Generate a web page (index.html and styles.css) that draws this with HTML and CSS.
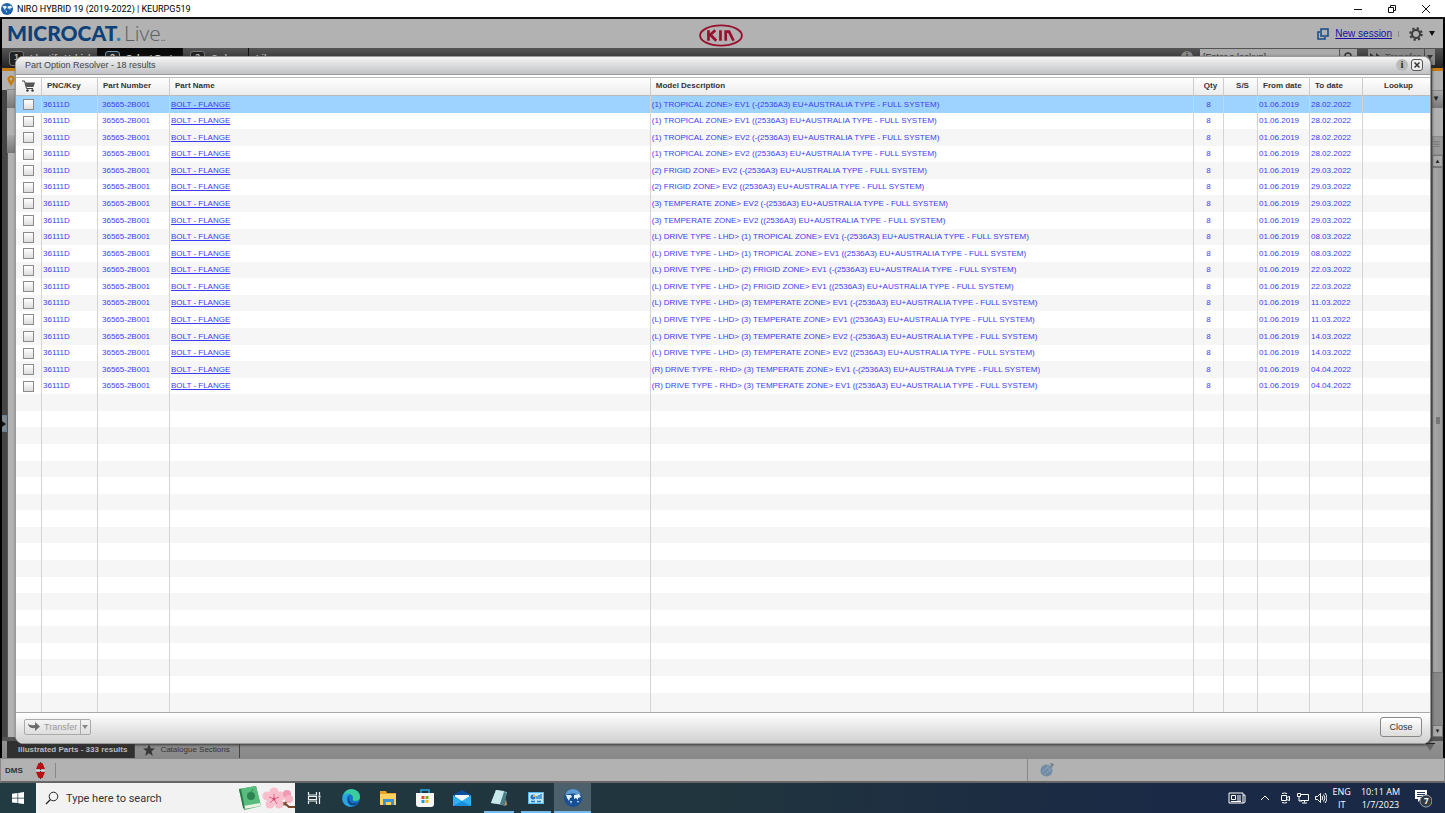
FILE: index.html
```html
<!DOCTYPE html>
<html lang="en">

<head>
    <meta charset="UTF-8">
    <meta name="viewport" content="width=device-width, initial-scale=1.0">
    <title>NIRO HYBRID 19 (2019-2022) | KEURPG519</title>
    <link rel="stylesheet" href="styles.css">
</head>

<body>
    <header class="titlebar">
        <svg class="globe" viewBox="0 0 18 18"><circle cx="9" cy="9" r="9" fill="#1c62ab"/><path d="M2 5l5-1 2 2-2 2-1 3-2-3zM10 5l5-1 2 3-3 1 0 3-2-3-2 1zM7 11l2 1-1 3z" fill="#e4f1fb"/></svg>
        <span class="window-title">NIRO HYBRID 19 (2019-2022) | KEURPG519</span>
        <div class="window-buttons">
            <button aria-label="Minimize"><svg viewBox="0 0 10 10"><path d="M1 5.500h8"/></svg></button>
            <button aria-label="Restore"><svg viewBox="0 0 10 10"><path d="M1.500 3.500h5v5h-5zM3.500 3.500v-2h5v5h-2"/></svg></button>
            <button aria-label="Close window"><svg viewBox="0 0 10 10"><path d="M1 1l8 8M9 1l-8 8"/></svg></button>
        </div>
    </header>

    <main class="app">
        <div class="brandbar">
            <div class="brand"><b>MICROCAT<i>.</i></b><span>Live</span><small>..</small></div>
            <svg class="kia" viewBox="0 0 42 22">
                <ellipse cx="21" cy="11" rx="20" ry="9.700" fill="none" stroke="#98102d" stroke-width="1.800"/>
                <path d="M9 6v10M15.500 6L10 11M11 10.500L16.500 16M20.500 6v10M25.500 16V7.300h3.200L33 16" fill="none" stroke="#98102d" stroke-width="2.600"/>
            </svg>
            <div class="session">
                <svg class="session-icon" viewBox="0 0 12 12"><path d="M4 1h7v7H4zM3 4H1v7h7V9" fill="none" stroke="#174a86" stroke-width="1.500"/></svg>
                <a href="#">New session</a>
                <span class="divider"></span>
                <svg class="gear" viewBox="0 0 14 14"><circle cx="7" cy="7" r="4" fill="none" stroke="#3b3b3b" stroke-width="2"/><circle cx="7" cy="7" r="5.800" fill="none" stroke="#3b3b3b" stroke-width="2" stroke-dasharray="2.300 2.255"/></svg>
                <svg class="caret" viewBox="0 0 6 5"><path d="M0 0h6L3 5z" fill="#111"/></svg>
            </div>
        </div>
        <nav class="nav">
            <a class="step identify" href="#"><span class="num">1</span>Identify Vehicle</a>
            <a class="step active" href="#"><span class="num">2</span>Select Parts</a>
            <a class="step order" href="#"><span class="num">3</span>Order</a>
            <a class="step library" href="#">Library</a>
            <div class="nav-search">
                <span class="info-dot">i</span>
                <input type="text" aria-label="Lookup" value="[Enter a lookup]">
                <button class="find" aria-label="Find"><svg viewBox="0 0 10 10"><circle cx="4" cy="4" r="3" fill="none" stroke="#333" stroke-width="1.500"/><path d="M6 6l3 3" stroke="#333"/></svg></button>
                <button class="nav-transfer"><svg viewBox="0 0 12 8"><path d="M0 0l5 4-5 4zM6 0l5 4-5 4z" fill="#333"/></svg>Transfer</button>
                <button class="nav-more" aria-label="More"><svg viewBox="0 0 6 4"><path d="M0 0h6L3 4z" fill="#333"/></svg></button>
            </div>
        </nav>
        <div class="workspace">
            <div class="left-rail">
                <button class="expand" aria-label="Expand panel"><svg viewBox="0 0 4 6"><path d="M0 0l4 3-4 3z" fill="#111"/></svg></button>
            </div>
            <div class="left-panel">
                <div class="pin"><svg viewBox="0 0 8 12"><path d="M4 11.500L1 6a3.500 3.500 0 1 1 6 0z" fill="#c77c0c"/><circle cx="4" cy="4" r="1.500" fill="#b2b2b2"/></svg></div>
                <div class="panel-head"></div>
                <div class="panel-box"></div>
                <div class="panel-head"></div>
                <div class="panel-fill"></div>
            </div>
            <div class="canvas"></div>
            <div class="right-panel">
                <div class="right-top"></div>
                <div class="right-head">▼</div>
                <div class="right-top tall"></div>
                <div class="right-list">≡</div>
                <button aria-label="Scroll up">▲</button>
                <div class="thumb"><span></span></div>
                <div class="track"></div>
                <button aria-label="Scroll down">▼</button>
            </div>
        </div>
        <div class="tabs">
            <a class="tab current" href="#">Illustrated Parts - 333 results</a>
            <a class="tab" href="#"><svg viewBox="0 0 12 12"><path d="M6 0l1.700 4.200 4.300.2-3.400 2.800L9.800 12 6 9.300 2.200 12l1.200-4.800L0 4.400l4.300-.2z" fill="#383838"/></svg>Catalogue Sections</a>
            <svg class="tab-menu" viewBox="0 0 10 8"><path d="M0 0h10L5 8z" fill="#666"/><path d="M0 .5h10" stroke="#222"/></svg>
        </div>
        <footer class="status">
            <span class="dms">DMS</span>
            <svg class="plug" viewBox="0 0 9 17"><path d="M4.500 0v17" stroke="#333"/><path d="M2.500 1h4L9 7H0zM0 10h9l-2.500 6h-4z" fill="#b80f12"/><path d="M0 8.500h9" stroke="#c9d6da"/></svg>
            <span class="sep"></span>
            <div class="status-right"><svg viewBox="0 0 14 14"><circle cx="6.500" cy="7.500" r="6" fill="#6f8ba5"/><path d="M2 9l7-6M4 12l8-7M7 3l4 6" stroke="#8fa5b8" fill="none"/><path d="M10 0l4 1-2 4z" fill="#71808d"/></svg></div>
        </footer>

        <section class="dialog" role="dialog" aria-labelledby="dialogTitle">
            <div class="dialog-head">
                <h2 id="dialogTitle">Part Option Resolver - 18 results</h2>
                <button class="info" aria-label="Information">i</button>
                <button class="dismiss" aria-label="Dismiss"><svg viewBox="0 0 8 8"><path d="M1.500 1.500l5 5M6.500 1.500l-5 5" stroke="#333" stroke-width="1.500"/></svg></button>
            </div>
            <div class="grid">
                <table>
                    <colgroup>
                        <col class="c-cart"><col class="c-key"><col class="c-number"><col class="c-name"><col><col class="c-qty"><col class="c-ss"><col class="c-from"><col class="c-to"><col class="c-lookup">
                    </colgroup>
                    <thead>
                        <tr>
                            <th><svg class="cart" viewBox="0 0 13 12" role="img" aria-label="Cart"><path d="M0 1h2.500l2 7.500H11" fill="none" stroke="#444"/><path d="M3 2.500h10L11.500 7h-7.200z" fill="#555"/><circle cx="5.500" cy="10.500" r="1.200" fill="#333"/><circle cx="10.500" cy="10.500" r="1.200" fill="#333"/></svg></th>
                            <th>PNC/Key</th>
                            <th>Part Number</th>
                            <th>Part Name</th>
                            <th>Model Description</th>
                            <th class="mid">Qty</th>
                            <th class="mid">S/S</th>
                            <th>From date</th>
                            <th>To date</th>
                            <th class="mid">Lookup</th>
                        </tr>
                    </thead>
                    <tbody id="rows"></tbody>
                </table>
            </div>
            <div class="dialog-foot">
                <div class="split">
                    <button class="transfer" disabled><svg viewBox="0 0 12 9"><path d="M0 1q1 3 7 2V0l5 4.500L7 9V6Q0 7 0 1z" fill="#6c6c6c"/></svg>Transfer</button>
                    <button class="more" disabled aria-label="More transfer options"><svg viewBox="0 0 6 4"><path d="M0 0h6L3 4z" fill="#888"/></svg></button>
                </div>
                <button class="close">Close</button>
            </div>
        </section>
    </main>

    <div class="taskbar">
        <button class="start" aria-label="Start"><svg viewBox="0 0 12 12"><path d="M0 1.700L5.500 1v4.700H0zM6.200.9L12 0v5.700H6.200zM0 6.400h5.500v4.700L0 10.400zM6.200 6.400H12V12l-5.800-.8z" fill="#fff"/></svg></button>
        <label class="search">
            <svg class="lens" viewBox="0 0 14 14"><circle cx="8.500" cy="5.500" r="4.300" fill="none" stroke="#222"/><path d="M5.500 8.500L1 13" stroke="#222" stroke-width="1.200"/></svg>
            <input type="text" placeholder="Type here to search" aria-label="Search">
            <svg class="art" viewBox="0 0 56 26">
                <path d="M0 4l17-3 5 20-17 4z" fill="#3fa568"/><path d="M0 4l17-3 4 17-17 3z" fill="#58bd7c"/><path d="M4 21l17-3 1 3-17 3z" fill="#e9f2df"/><path d="M0 4l2 0 4 20-2-1z" fill="#28784b"/><ellipse cx="12" cy="11" rx="4" ry="4" fill="#2e8450"/><path d="M12 7l2-3" stroke="#2e8450"/>
                <path d="M40 17q6 1 10 5h6M44 20q5-4 9-8" fill="none" stroke="#7b4a2a" stroke-width="2"/>
                <g fill="#f9bfcd"><circle cx="35" cy="7" r="4.500"/><circle cx="42" cy="11" r="4.500"/><circle cx="40" cy="19" r="4.500"/><circle cx="31" cy="19" r="4.500"/><circle cx="28" cy="11" r="4.500"/><circle cx="35" cy="14" r="5"/></g>
                <path d="M35 14V9M35 14l5-2M35 14l3 5M35 14l-4 4M35 14l-5-2" stroke="#e0668c"/><circle cx="35" cy="14" r="1.500" fill="#d8486f"/>
                <circle cx="48" cy="9" r="4" fill="#f29ab4"/><circle cx="50" cy="14" r="4" fill="#f7b4c5"/>
            </svg>
        </label>
        <button class="task" aria-label="Task view"><svg viewBox="0 0 18 18"><path d="M3.500 3v3h8V3M3.500 15v-3h8v3M3.500 7.500h8v3h-8zM14.500 3v3M14.500 9v6" fill="none" stroke="#eee" stroke-width="1.200"/><path d="M13.500 6.500h2v2h-2z" fill="#fff"/></svg></button>
        <button class="task" aria-label="Edge"><svg viewBox="0 0 18 18"><circle cx="9" cy="9" r="9" fill="#1673c6"/><path d="M1 7Q3 0 10 0q8 1 8 8 0 4-5 4-3 0-2-3 0-4-5-4-3 0-5 2z" fill="#39cda0"/><path d="M1 7q3-4 7-2-4 2-3 6 2 5 8 5-5 3-9 .5Q-1 13 1 7z" fill="#2aa5df"/><path d="M8 7q-3 5 2 7 4 1 6-1-3 5-8 3-5-4 0-9z" fill="#0b478c"/></svg></button>
        <button class="task" aria-label="File Explorer"><svg viewBox="0 0 18 18"><path d="M1 2h6l1 2h9v12H1z" fill="#e6a52a"/><path d="M1 5h16v11H1z" fill="#fbd260"/><path d="M4 10h11v6h-3v-3H7v3H4z" fill="#3e8fd4"/></svg></button>
        <button class="task" aria-label="Store"><svg viewBox="0 0 18 18"><path d="M5 5V1h8v4" fill="none" stroke="#29abe2" stroke-width="1.500"/><path d="M0 4h18v11q0 3-3 3H3q-3 0-3-3z" fill="#f7f7f7"/><path d="M5.500 7h3v3h-3z" fill="#e84c25"/><path d="M9.500 7h3v3h-3z" fill="#7cb518"/><path d="M5.500 11h3v3h-3z" fill="#159fe0"/><path d="M9.500 11h3v3h-3z" fill="#fcb813"/></svg></button>
        <button class="task" aria-label="Mail"><svg viewBox="0 0 18 18"><path d="M0 6l9-5 9 5v5H0z" fill="#0c4f9e"/><path d="M2 6h14v6H2z" fill="#f1f6fa"/><path d="M0 6l9 6 9-6v11H0z" fill="#2fb2f1"/><path d="M0 17l9-5 9 5z" fill="#1791dd"/></svg></button>
        <button class="task open" aria-label="Notepad"><svg viewBox="0 0 18 18"><path d="M6 1l11 2-4 13-12-2z" fill="#9fced8"/><path d="M6 1l8 1-4 13-9-1z" fill="#c9e8ec"/><path d="M14 3l3 1-3 13-4-2z" fill="#4c7c86"/><path d="M16 10l1 6-3 1z" fill="#b19a62"/></svg></button>
        <button class="task open" aria-label="Control Panel"><svg viewBox="0 0 18 18"><path d="M1 3h16v12H1z" fill="#54b9ec"/><path d="M2 4h14v10H2z" fill="#bde7fb"/><circle cx="6" cy="8" r="2.500" fill="#2676bd"/><path d="M6 8V5.500A2.500 2.500 0 0 1 8.500 8z" fill="#efb43a"/><path d="M10 10V7M12 10V6M14 10V5M4 12.500h4M10 12.500h4" stroke="#2676bd" stroke-width="1.300"/></svg></button>
        <button class="task open selected" aria-label="Microcat"><svg viewBox="0 0 18 18"><circle cx="9" cy="9" r="9" fill="#164f95"/><path d="M1 6Q3 0 9 0t8 6q-8-3-16 0z" fill="#5d9bd4"/><path d="M2 6l5 0 1 2-2 1-1 3-2-3zM10 6l5-1 2 3-3 1 0 2-2-2-2 1zM6 12l2 0-1 3zM13 12l2 0-1 2z" fill="#e4f1fb"/></svg></button>
        <div class="tray">
            <svg class="news" viewBox="0 0 18 12"><path d="M1 1h14v10H1zM15 3h2v7q0 1-2 1M3.500 3.500h4v4h-4zM9 4h4M9 6h4M9 8h4M3 9.500h10" fill="none" stroke="#fff"/></svg>
            <svg class="chevron" viewBox="0 0 10 6"><path d="M1 5l4-4 4 4" fill="none" stroke="#fff"/></svg>
            <svg viewBox="0 0 12 12"><path d="M2.500 3.500h5v5h-5zM7.500 5.500l3-1v4l-3-1M3 1.500q2.500-1 5 0M3 10.500q2.500 1 5 0" fill="none" stroke="#fff"/></svg>
            <svg viewBox="0 0 12 12"><path d="M3.500 2.500h8v6h-8M7.500 8.500v2M5 11h5M.5 1.500h3v3h-3zM2 5v4h3" fill="none" stroke="#fff"/></svg>
            <svg viewBox="0 0 12 12"><path d="M.5 4.500h2l3-3v9l-3-3h-2zM7 4q1.500 2 0 4M8.500 2.500q3 3.500 0 7M10 1q4 5 0 10" fill="none" stroke="#fff"/></svg>
            <div class="tray-text">ENG<br>IT</div>
            <div class="tray-text clock">10:11 AM<br>1/7/2023</div>
            <button class="notes" aria-label="Notifications"><svg viewBox="0 0 18 20"><path d="M1 2h12v9H7l-3 3v-3H1z" fill="#fff"/><path d="M3 4.500h8M3 6.500h8M3 8.500h5" stroke="#26395b"/><circle cx="12" cy="13" r="6" fill="#333a42" stroke="#9ba3ad"/></svg><span>7</span></button>
        </div>
    </div>

    <script>
        const END = "EU+AUSTRALIA TYPE - FULL SYSTEM)";
        const options = [
            ["(1) TROPICAL ZONE> EV1 (-(2536A3)", "28.02.2022"],
            ["(1) TROPICAL ZONE> EV1 ((2536A3)", "28.02.2022"],
            ["(1) TROPICAL ZONE> EV2 (-(2536A3)", "28.02.2022"],
            ["(1) TROPICAL ZONE> EV2 ((2536A3)", "28.02.2022"],
            ["(2) FRIGID ZONE> EV2 (-(2536A3)", "29.03.2022"],
            ["(2) FRIGID ZONE> EV2 ((2536A3)", "29.03.2022"],
            ["(3) TEMPERATE ZONE> EV2 (-(2536A3)", "29.03.2022"],
            ["(3) TEMPERATE ZONE> EV2 ((2536A3)", "29.03.2022"],
            ["(L) DRIVE TYPE - LHD> (1) TROPICAL ZONE> EV1 (-(2536A3)", "08.03.2022"],
            ["(L) DRIVE TYPE - LHD> (1) TROPICAL ZONE> EV1 ((2536A3)", "08.03.2022"],
            ["(L) DRIVE TYPE - LHD> (2) FRIGID ZONE> EV1 (-(2536A3)", "22.03.2022"],
            ["(L) DRIVE TYPE - LHD> (2) FRIGID ZONE> EV1 ((2536A3)", "22.03.2022"],
            ["(L) DRIVE TYPE - LHD> (3) TEMPERATE ZONE> EV1 (-(2536A3)", "11.03.2022"],
            ["(L) DRIVE TYPE - LHD> (3) TEMPERATE ZONE> EV1 ((2536A3)", "11.03.2022"],
            ["(L) DRIVE TYPE - LHD> (3) TEMPERATE ZONE> EV2 (-(2536A3)", "14.03.2022"],
            ["(L) DRIVE TYPE - LHD> (3) TEMPERATE ZONE> EV2 ((2536A3)", "14.03.2022"],
            ["(R) DRIVE TYPE - RHD> (3) TEMPERATE ZONE> EV1 (-(2536A3)", "04.04.2022"],
            ["(R) DRIVE TYPE - RHD> (3) TEMPERATE ZONE> EV1 ((2536A3)", "04.04.2022"]
        ];
        const totalRows = 37;
        const body = document.getElementById("rows");

        for (let i = 0; i < totalRows; i++) {
            const row = body.insertRow();
            const option = options[i];
            if (!option) {
                row.innerHTML = "<td></td>".repeat(10);
                continue;
            }
            if (i === 0) row.className = "selected";
            row.innerHTML = `<td class="pick"><input type="checkbox" aria-label="Select option ${i + 1}"></td>
                <td>36111D</td><td class="number">36565-2B001</td>
                <td><a href="#">BOLT - FLANGE</a></td>
                <td>${option[0].replace(/>/g, "&gt;")} ${END}</td>
                <td class="mid">8</td><td></td><td>01.06.2019</td><td>${option[1]}</td><td></td>`;
        }
    </script>
</body>

</html>
```

FILE: styles.css
```css
* {
    box-sizing: border-box;
}

body {
    margin: 0;
    height: 100vh;
    display: flex;
    flex-direction: column;
    overflow: hidden;
    font-family: "Liberation Sans", Arial, sans-serif;
    font-size: 9px;
    color: #333;
    background: #000;
}

button,
input {
    font: inherit;
    color: inherit;
    margin: 0;
    padding: 0;
    border: none;
    background: none;
}

svg {
    display: block;
    flex: none;
}

/* window title */
.titlebar {
    height: 17px;
    flex: none;
    display: flex;
    align-items: center;
    gap: 4px;
    padding: 0 2px 0 1px;
    background: #fff;
    color: #000;
    font-family: Roboto, sans-serif;
}

.globe {
    width: 12px;
    height: 12px;
}

.window-buttons {
    margin-left: auto;
    display: flex;
}

.window-buttons button {
    width: 34px;
    display: flex;
    justify-content: center;
}

.window-buttons svg {
    width: 10px;
    height: 10px;
    fill: none;
    stroke: #111;
}

/* application behind the dialog */
.app {
    flex: 1;
    min-height: 0;
    position: relative;
    display: flex;
    flex-direction: column;
    border-top: 2px solid #111;
}

.brandbar {
    height: 29px;
    flex: none;
    margin: 0 2px;
    padding: 0 8px 0 5px;
    display: grid;
    grid-template-columns: 1fr auto 1fr;
    align-items: center;
    background: #b2b2b2;
}

.brand {
    font-family: Lato, sans-serif;
    font-size: 21px;
    line-height: 28px;
    color: #5c6064;
}

.brand b {
    color: #0d4179;
    font-weight: 900;
}

.brand i {
    color: #2b83bd;
    font-style: normal;
}

.brand span {
    margin-left: 3px;
    font-family: "Open Sans", sans-serif;
    font-weight: 300;
}

.brand small {
    font-size: 10px;
}

.kia {
    width: 44px;
    height: 23px;
}

.session {
    display: flex;
    align-items: center;
    justify-content: flex-end;
    gap: 6px;
    padding-bottom: 3px;
}

.session a {
    color: #1111a8;
    font-size: 10px;
}

.session-icon {
    width: 12px;
    height: 12px;
}

.divider {
    width: 1px;
    height: 6px;
    background: #888;
}

.gear {
    width: 14px;
    height: 14px;
    margin-left: 4px;
}

.caret {
    width: 6px;
    height: 5px;
}

.nav {
    height: 20px;
    flex: none;
    margin: 0 2px;
    display: flex;
    background: linear-gradient(#555, #222);
    font-weight: bold;
}

.step {
    display: flex;
    align-items: center;
    gap: 6px;
    padding-left: 7px;
    border-right: 1px solid #111;
    color: #bbb;
    text-decoration: none;
    white-space: nowrap;
}

.step.identify {
    width: 96px;
}

.step.active {
    width: 85px;
    background: #0a0a0a;
    color: #ddd;
}

.step.order {
    width: 66px;
}

.step.library {
    border-right: none;
}

.num {
    width: 15px;
    height: 15px;
    flex: none;
    border: 1px solid #777;
    border-radius: 3px;
    background: #222;
    text-align: center;
}

.active .num {
    border-color: #6c9ab8;
}

.nav-search {
    margin-left: auto;
    padding: 1px 8px 0 0;
    display: flex;
    align-items: flex-start;
}

.info-dot {
    width: 12px;
    height: 12px;
    margin: 2px 7px 0 0;
    border-radius: 6px;
    background: #888;
    text-align: center;
}

.nav-search input {
    width: 139px;
    height: 16px;
    padding-left: 3px;
    background: #aaa;
    font-weight: normal;
}

.find {
    width: 18px;
    height: 16px;
    margin-right: 11px;
    padding-left: 4px;
    background: #a2a2a2;
    border-left: 1px solid #555;
}

.find svg {
    width: 10px;
    height: 10px;
}

.nav-transfer {
    width: 56px;
    height: 16px;
    display: flex;
    align-items: center;
    gap: 3px;
    padding-left: 2px;
    background: #8a8a8a;
    color: #555;
}

.nav-transfer svg {
    width: 12px;
    height: 8px;
}

.nav-more {
    width: 10px;
    height: 16px;
    margin-left: 1px;
    padding-left: 2px;
    background: #8a8a8a;
}

.nav-more svg {
    width: 6px;
    height: 4px;
}

.workspace {
    flex: 1;
    min-height: 0;
    margin: 0 2px;
    display: flex;
    border-top: 3px solid #c77c0c;
    background: #b2b2b2;
}

.left-rail {
    width: 5px;
    margin-top: 19px;
    display: flex;
    align-items: center;
    background: #454545;
}

.expand {
    width: 5px;
    height: 17px;
    margin-top: 20px;
    background: #7d8890;
    border: 1px solid #668299;
    border-left: none;
}

.expand svg {
    width: 4px;
    height: 6px;
}

.left-panel {
    width: 8px;
    display: flex;
    flex-direction: column;
}

.pin {
    height: 19px;
    padding-top: 4px;
    border-bottom: 1px solid #888;
}

.pin svg {
    width: 8px;
    height: 12px;
}

.panel-head {
    height: 18px;
    background: linear-gradient(#a8a8a8, #777);
}

.panel-box {
    height: 27px;
}

.panel-fill {
    flex: 1;
    border-left: 1px solid #555;
}

.canvas {
    flex: 1;
    background: #aaa;
}

.right-panel {
    width: 14px;
    display: flex;
    flex-direction: column;
    background: #b0b0b0;
    border-left: 3px solid #666;
    font-size: 8px;
    color: #222;
}

.right-top {
    height: 19px;
}

.right-top.tall {
    height: 28px;
}

.right-head {
    height: 18px;
    line-height: 16px;
    border-top: 1px solid #888;
    background: linear-gradient(#aaa, #777);
}

.right-list {
    height: 19px;
    border: 1px solid #8b8b8b;
    background: #999;
    font-size: 12px;
    line-height: 14px;
    color: #777;
}

.right-panel button {
    height: 12px;
    border: 1px solid #777;
    background: #aaa;
    font-size: 6px;
    line-height: 8px;
}

.thumb {
    flex: 1;
    display: flex;
    align-items: center;
    justify-content: center;
    border: 1px solid #777;
    background: linear-gradient(90deg, #aaa, #999);
}

.thumb span {
    width: 4px;
    height: 7px;
    background: #777;
}

.track {
    height: 52px;
    background: #888;
}

.tabs {
    height: 21px;
    flex: none;
    margin: 0 2px;
    padding-left: 5px;
    display: flex;
    align-items: stretch;
    border-top: 4px solid #555;
    background: linear-gradient(#929292, #888);
    font-size: 8px;
}

.tab {
    display: flex;
    align-items: center;
    gap: 5px;
    padding: 0 9px 0 8px;
    border-right: 1px solid #444;
    color: #333;
    text-decoration: none;
}

.tab.current {
    padding: 0 7px 0 11px;
    background: #303030;
    color: #bbb;
    font-weight: bold;
}

.tab svg {
    width: 12px;
    height: 12px;
}

.tab-menu {
    width: 10px;
    height: 8px;
    margin: 2px 8px 0 auto;
}

.status {
    height: 25px;
    flex: none;
    padding-left: 4px;
    display: flex;
    align-items: center;
    border: 1px solid #888;
    border-bottom: 2px solid #666;
    background: #b2b2b2;
    font-size: 8px;
    font-weight: bold;
}

.plug {
    width: 9px;
    height: 17px;
    margin: 0 10px 0 13px;
}

.sep {
    width: 1px;
    height: 15px;
    background: #888;
}

.status-right {
    width: 417px;
    height: 22px;
    margin-left: auto;
    padding: 4px 12px;
    border-left: 1px solid #888;
}

.status-right svg {
    width: 14px;
    height: 14px;
}

/* dialog */
.dialog {
    position: absolute;
    inset: 37px 14px 39px 15px;
    display: flex;
    flex-direction: column;
    overflow: hidden;
    border: 1px solid #999;
    border-radius: 8px;
    background: #fff;
    box-shadow: 1px 1px 3px #333;
}

.dialog-head {
    height: 18px;
    flex: none;
    display: flex;
    align-items: center;
    gap: 3px;
    padding: 0 7px 2px 9px;
    border-bottom: 1px solid #999;
    background: linear-gradient(#f4f4f4, #c0c2c5);
}

.dialog-head h2 {
    margin: 0 auto 0 0;
    font-size: 9px;
    font-weight: normal;
    color: #444;
}

.info {
    width: 12px;
    height: 12px;
    border-radius: 6px;
    background: #bbb;
    font-family: "Liberation Serif", serif;
    font-size: 11px;
    font-weight: bold;
    line-height: 11px;
}

.dismiss {
    width: 12px;
    height: 12px;
    padding: 1px;
    border: 1px solid #555;
    border-radius: 3px;
    background: #eee;
}

.dismiss svg {
    width: 8px;
    height: 8px;
}

.grid {
    flex: 1;
    min-height: 0;
    margin-top: 2px;
    overflow: hidden;
    border-bottom: 1px solid #aaa;
    background: #f6f6f6;
}

table {
    width: 100%;
    table-layout: fixed;
    border-collapse: separate;
    border-spacing: 0;
    font-size: 8px;
    line-height: 10px;
}

.c-cart {
    width: 26px;
}

.c-key {
    width: 56px;
}

.c-number {
    width: 72px;
}

.c-name {
    width: 34%;
}

.c-qty {
    width: 30px;
}

.c-ss {
    width: 34px;
}

.c-from {
    width: 52px;
}

.c-to {
    width: 53px;
}

.c-lookup {
    width: 67px;
}

th {
    height: 19px;
    padding: 0 5px 2px;
    border-top: 1px solid #bbb;
    border-right: 1px solid #ccc;
    border-bottom: 1px solid #bbb;
    background: linear-gradient(#fff, #ececec);
    text-align: left;
    white-space: nowrap;
}

td {
    height: 17px;
    padding: 0 1px;
    border-right: 1px solid #d4d4d4;
    color: #3c3cf5;
    white-space: nowrap;
}

th:last-child,
td:last-child {
    border-right: none;
}

/* rows alternate 17px and 16px so that 37 of them fill the grid */
tr:nth-child(7n + 2) td,
tr:nth-child(7n + 4) td,
tr:nth-child(7n + 6) td {
    height: 16px;
}

/* the last stripe runs down to the footer */
tbody tr:last-child td {
    height: 24px;
}

tbody tr {
    background: #f6f6f6;
}

tbody tr:nth-child(even) {
    background: #fff;
}

tbody tr.selected {
    background: #9fd3ff;
}

td.number {
    padding-left: 4px;
}

td a {
    color: inherit;
}

.mid {
    text-align: center;
}

th.mid {
    padding-left: 9px;
}

.cart {
    width: 13px;
    height: 12px;
    margin-left: 1px;
}

td.pick {
    padding-left: 7px;
}

.pick input {
    appearance: none;
    display: block;
    width: 11px;
    height: 11px;
    border: 1px solid #8b8b8b;
    background: linear-gradient(#fff, #ddd);
}

.dialog-foot {
    height: 30px;
    flex: none;
    display: flex;
    align-items: center;
    justify-content: space-between;
    padding: 0 8px 3px;
    background: linear-gradient(#fff, #d0d0d0);
}

.split {
    display: flex;
    height: 16px;
    border: 1px solid #aaa;
    border-radius: 2px;
    color: #999;
}

.transfer {
    display: flex;
    align-items: center;
    gap: 4px;
    padding: 0 3px;
}

.transfer svg {
    width: 12px;
    height: 9px;
}

.more {
    width: 10px;
    padding-left: 1px;
    border-left: 1px solid #aaa;
}

.more svg {
    width: 6px;
    height: 4px;
}

.close {
    width: 42px;
    height: 20px;
    border: 1px solid #888;
    border-radius: 3px;
    background: linear-gradient(#fff, #ddd);
}

/* taskbar */
.taskbar {
    height: 30px;
    flex: none;
    display: flex;
    background: linear-gradient(90deg, #223b43, #20343e 50%, #1a2945 80%);
    font-family: "Open Sans", sans-serif;
    color: #fff;
}

.start {
    width: 36px;
    display: flex;
    align-items: center;
    justify-content: center;
}

.start svg {
    width: 12px;
    height: 12px;
}

.search {
    width: 259px;
    display: flex;
    align-items: center;
    gap: 7px;
    padding-left: 9px;
    background: #f2f2f2;
}

.lens {
    width: 14px;
    height: 14px;
}

.search input {
    flex: 1;
    min-width: 0;
    font-family: Roboto, sans-serif;
    font-size: 11px;
}

.search input::placeholder {
    color: #333;
    opacity: 1;
}

.art {
    width: 56px;
    height: 26px;
}

.task {
    width: 37px;
    height: 30px;
    display: flex;
    align-items: center;
    justify-content: center;
}

.task svg {
    width: 18px;
    height: 18px;
}

.task.open {
    background: linear-gradient(#76b9ed, #76b9ed) center bottom / 30px 2px no-repeat;
}

.task.selected {
    background-color: #4c606b;
    background-size: 37px 2px;
}

.tray {
    margin-left: auto;
    display: flex;
    align-items: center;
    gap: 6px;
    padding-right: 13px;
    text-align: center;
}

.tray svg {
    width: 12px;
    height: 12px;
}

.tray .news {
    width: 18px;
    margin-right: 8px;
}

.tray .chevron {
    width: 10px;
    height: 6px;
    margin-right: 3px;
}

.tray-text {
    line-height: 13px;
}

.clock {
    margin: 0 8px 0 4px;
}

.notes {
    position: relative;
    width: 18px;
    height: 20px;
}

.tray .notes svg {
    width: 18px;
    height: 20px;
}

.notes span {
    position: absolute;
    left: 10px;
    top: 7px;
    font-size: 8px;
    line-height: 12px;
    font-weight: bold;
}
```
